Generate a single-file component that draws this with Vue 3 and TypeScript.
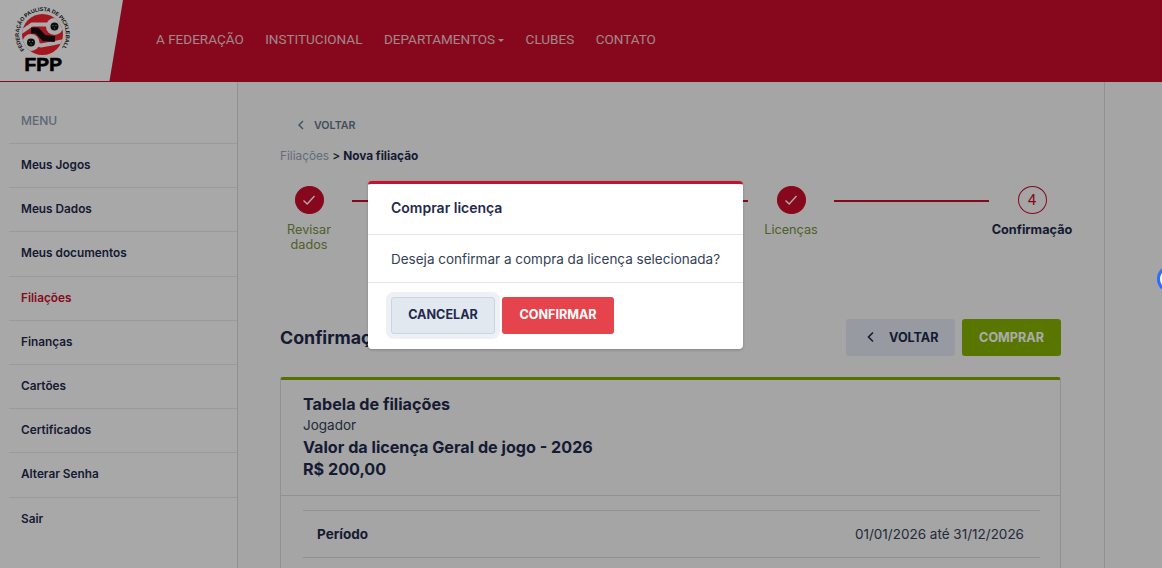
<template>
  <div class="page">
    <header class="topbar">
      <div class="logo_box">
        <svg class="logo" width="90" height="80" viewBox="0 0 90 80">
          <defs>
            <path id="ring" d="M 24.5 49.6 A 23.5 23.5 0 1 1 60.5 49.6" />
            <clipPath id="disc"><circle cx="42.5" cy="34.5" r="20.5" /></clipPath>
          </defs>
          <circle cx="42.5" cy="34.5" r="20.5" fill="#f8222f" />
          <g clip-path="url(#disc)" fill="none">
            <circle cx="54.5" cy="26.5" r="8.5" fill="#fff" />
            <circle cx="31" cy="42.5" r="8.5" fill="#fff" />
            <path d="M21 32 L32 24.5 L46 24.5 L54 27" stroke="#fff" stroke-width="4" />
            <path d="M31 43 L41 45.5 L52 43.5 L64 41" stroke="#fff" stroke-width="4" />
            <path d="M31 30.5 L37 30.5 L44 38 L55 39" stroke="#111" stroke-width="6" />
          </g>
          <circle cx="54.5" cy="26.5" r="4" fill="#151515" />
          <circle cx="31" cy="42.5" r="4" fill="#151515" />
          <g fill="#bbb">
            <circle cx="53" cy="25.5" r="0.6" /><circle cx="56" cy="25.5" r="0.6" /><circle cx="54.5" cy="28" r="0.6" />
            <circle cx="29.5" cy="41.5" r="0.6" /><circle cx="32.5" cy="41.5" r="0.6" /><circle cx="31" cy="44" r="0.6" />
          </g>
          <text class="logo_ring"><textPath href="#ring" textLength="104" lengthAdjust="spacing">FEDERAÇÃO PAULISTA DE PICKLEBALL</textPath></text>
          <text class="logo_fpp" x="24.5" y="70.5">FPP</text>
        </svg>
      </div>
      <nav class="nav">
        <a v-for="item in navItems" :key="item" class="nav_link" :class="{ caret: item === 'DEPARTAMENTOS' }">{{ item }}</a>
      </nav>
    </header>

    <div class="main">
      <aside class="sidebar">
        <div class="menu_title">MENU</div>
        <a v-for="item in menuItems" :key="item" class="menu_item" :class="{ active: item === 'Filiações' }">{{ item }}</a>
      </aside>

      <section class="content">
        <a class="back_link">
          <svg width="8" height="10" viewBox="0 0 8 10"><path d="M6 1 L2 5 L6 9" fill="none" stroke="currentColor" stroke-width="1.4" /></svg>
          VOLTAR
        </a>
        <div class="crumbs"><span class="crumb_muted">Filiações</span> &gt; <b>Nova filiação</b></div>

        <div class="stepper">
          <template v-for="(step, i) in steps" :key="step.label">
            <div class="step">
              <div class="step_circle" :class="{ done: step.done }">
                <svg v-if="step.done" width="14" height="12" viewBox="0 0 14 12"><path d="M1.5 6.5 L5.2 10 L12.5 2" fill="none" stroke="#fff" stroke-width="1.4" /></svg>
                <span v-else>{{ i + 1 }}</span>
              </div>
              <div class="step_label" :class="{ current: !step.done }">{{ step.label }}</div>
            </div>
            <div v-if="i < steps.length - 1" class="step_line"></div>
          </template>
        </div>

        <div class="title_row">
          <h2>Confirmação</h2>
          <div class="title_actions">
            <button class="btn btn_grey">
              <svg width="9" height="12" viewBox="0 0 9 12"><path d="M7 1.5 L2.5 6 L7 10.5" fill="none" stroke="currentColor" stroke-width="1.6" /></svg>
              VOLTAR
            </button>
            <button class="btn btn_green">COMPRAR</button>
          </div>
        </div>

        <div class="card">
          <div class="card_head">
            <div class="card_title">Tabela de filiações</div>
            <div class="card_sub">Jogador</div>
            <div class="card_title">Valor da licença Geral de jogo - 2026</div>
            <div class="card_title">R$ 200,00</div>
          </div>
          <div class="card_body">
            <div class="row">
              <span class="row_label">Período</span>
              <span>01/01/2026 até 31/12/2026</span>
            </div>
          </div>
        </div>
      </section>

      <div class="right_col"></div>
    </div>

    <div class="overlay"></div>
    <div class="chat_bubble"></div>

    <div class="modal">
      <div class="modal_head">Comprar licença</div>
      <div class="modal_body">Deseja confirmar a compra da licença selecionada?</div>
      <div class="modal_foot">
        <button class="btn btn_cancel">CANCELAR</button>
        <button class="btn btn_confirm">CONFIRMAR</button>
      </div>
    </div>
  </div>
</template>

<script setup lang="ts">
const navItems: string[] = ['A FEDERAÇÃO', 'INSTITUCIONAL', 'DEPARTAMENTOS', 'CLUBES', 'CONTATO']

const menuItems: string[] = [
  'Meus Jogos',
  'Meus Dados',
  'Meus documentos',
  'Filiações',
  'Finanças',
  'Cartões',
  'Certificados',
  'Alterar Senha',
  'Sair',
]

const steps: { label: string; done: boolean }[] = [
  { label: 'Revisar dados', done: true },
  { label: 'Documentos', done: true },
  { label: 'Licenças', done: true },
  { label: 'Confirmação', done: false },
]
</script>

<style>
html,
body {
  margin: 0;
  height: 100%;
  overflow: hidden;
}
</style>

<style scoped>
.page {
  position: relative;
  height: 568px;
  overflow: hidden;
  background: #fbfbfb;
  font-family: Inter, "Liberation Sans", sans-serif;
  color: #1f2a4d;
}

.topbar {
  height: 82px;
  display: flex;
  background: #c90d2a;
}

.logo_box {
  width: 123px;
  height: 81px;
  background: #fff;
  clip-path: polygon(0 0, 100% 0, 89% 100%, 0 100%);
}

.logo {
  display: block;
}

.logo_ring {
  font-family: "Liberation Sans", sans-serif;
  font-size: 5.4px;
  font-weight: 700;
  fill: #111;
}

.logo_fpp {
  font-family: "Liberation Sans", sans-serif;
  font-size: 19px;
  font-weight: 700;
  letter-spacing: 0.2px;
  fill: #000;
  stroke: #000;
  stroke-width: 0.7px;
}

.nav {
  display: flex;
  align-items: center;
  gap: 21.5px;
  padding: 0 0 4px 33px;
  margin-top: -1px;
}

.nav_link {
  font-family: Roboto, sans-serif;
  font-size: 13.5px;
  color: #f1c9cf;
}

.nav_link.caret::after {
  content: "";
  display: inline-block;
  margin-left: 3px;
  vertical-align: 2px;
  border-top: 3px solid currentColor;
  border-left: 3px solid transparent;
  border-right: 3px solid transparent;
}

.main {
  display: flex;
  height: 486px;
}

.sidebar {
  width: 228px;
  margin-left: 9px;
  flex: none;
  border-right: 1px solid #d5d8de;
  padding-top: 17px;
}

.menu_title {
  height: 45px;
  line-height: 43px;
  padding-left: 12px;
  box-sizing: border-box;
  border-bottom: 1px solid #e2e8f0;
  font-size: 12px;
  font-weight: 500;
  color: #8a99ad;
}

.menu_item {
  display: block;
  height: 44.2px;
  line-height: 42px;
  box-sizing: border-box;
  padding-left: 12px;
  font-size: 11.8px;
  font-weight: 600;
  border-bottom: 1px solid #e2e8f0;
}

.menu_item:last-child {
  border-bottom: 0;
}

.menu_item.active {
  color: #c8102e;
}

.content {
  flex: none;
  width: 867px;
  box-sizing: border-box;
  padding: 36px 43px 0 42px;
  border-right: 1px solid #d5d8de;
  background: #f6f6f6;
}

.back_link {
  display: flex;
  align-items: center;
  gap: 9px;
  padding-left: 17px;
  height: 14px;
  font-size: 10.7px;
  font-weight: 600;
  color: #64748b;
}

.crumbs {
  margin-top: 16px;
  font-size: 11.8px;
  line-height: 16px;
  font-weight: 500;
}

.crumb_muted {
  color: #94a3b8;
  font-weight: 400;
}

.crumbs b {
  font-weight: 700;
}

.stepper {
  display: flex;
  align-items: flex-start;
  margin-top: 22px;
  margin-left: -14px;
  margin-right: -14px;
}

.step {
  width: 86px;
  flex: none;
  display: flex;
  flex-direction: column;
  align-items: center;
}

.step_circle {
  width: 29px;
  height: 28px;
  box-sizing: border-box;
  border-radius: 50%;
  display: flex;
  align-items: center;
  justify-content: center;
  border: 1px solid #c90d2a;
  color: #c90d2a;
  font-family: Roboto, sans-serif;
  font-size: 15px;
}

.step_circle.done {
  background: #c90d2a;
}

.step_label {
  margin-top: 8px;
  max-width: 62px;
  text-align: center;
  font-size: 12.7px;
  line-height: 15px;
  color: #768f3e;
}

.step_label.current {
  max-width: none;
  color: #1f2a4d;
  font-weight: 700;
}

.step_line {
  width: 155px;
  flex: none;
  height: 2px;
  margin-top: 14px;
  background: #c90d2a;
}

.title_row {
  display: flex;
  align-items: center;
  justify-content: space-between;
  margin-top: 67px;
}

.title_row h2 {
  margin: 0;
  font-size: 17.8px;
  font-weight: 700;
}

.title_actions {
  display: flex;
  gap: 7px;
}

.btn {
  height: 37px;
  box-sizing: border-box;
  border: 0;
  border-radius: 3px;
  font-family: Inter, "Liberation Sans", sans-serif;
  font-size: 12.6px;
  font-weight: 700;
  padding: 0 0 1px;
}

.btn_grey {
  width: 109px;
  padding-left: 20px;
  background: #e2e8f0;
  color: #1f2a4d;
  display: flex;
  align-items: center;
  gap: 14px;
}

.btn_green {
  width: 99px;
  background: #84b000;
  color: #fff;
}

.card {
  margin-top: 21px;
  border: 1px solid #d5d8de;
  border-top: 3px solid #7fa800;
  border-radius: 3px 3px 0 0;
}

.card_head {
  padding: 13px 22px 15px;
  border-bottom: 1px solid #d5d8de;
}

.card_title {
  font-size: 16.15px;
  line-height: 22px;
  font-weight: 700;
}

.card_sub {
  font-size: 13.5px;
  line-height: 21px;
  color: #334155;
}

.card_body {
  padding: 14px 20px 0 22px;
  min-height: 200px;
}

.row {
  display: flex;
  justify-content: space-between;
  height: 48px;
  line-height: 46px;
  padding: 0 16px 0 14px;
  box-sizing: border-box;
  border-top: 1px solid #d5d8de;
  border-bottom: 1px solid #d5d8de;
  font-size: 13.5px;
  color: #334155;
}

.row_label {
  font-weight: 700;
  color: #1f2a4d;
}

.right_col {
  flex: 1;
  background: #f6f6f6;
}

.chat_bubble {
  position: absolute;
  left: 1157px;
  top: 265px;
  width: 28px;
  height: 28px;
  box-sizing: border-box;
  border: 3px solid #2f6bff;
  border-radius: 50%;
  background: #fff;
}

.overlay {
  position: absolute;
  inset: 0;
  background: rgba(0, 0, 0, 0.33);
}

.modal {
  position: absolute;
  left: 368px;
  top: 181px;
  width: 375px;
  box-sizing: border-box;
  background: #fff;
  border-top: 3px solid #c8102e;
  border-radius: 4px;
  box-shadow: 0 1px 3px rgba(0, 0, 0, 0.2);
}

.modal_head {
  height: 51px;
  line-height: 48px;
  padding-left: 23px;
  font-size: 14px;
  font-weight: 600;
  box-sizing: border-box;
  border-bottom: 1px solid #e2e8f0;
}

.modal_body {
  height: 48px;
  line-height: 48px;
  padding-left: 23px;
  font-size: 13.5px;
  color: #334155;
  box-sizing: border-box;
  border-bottom: 1px solid #e2e8f0;
}

.modal_foot {
  display: flex;
  gap: 7px;
  padding: 14px 23px 15px;
}

.btn_cancel {
  width: 104px;
  padding-bottom: 2px;
  background: #e2e8f0;
  color: #1f2a4d;
  border: 1px solid #cbd5e1;
  box-shadow: 0 0 0 5px #edf0f5;
}

.btn_confirm {
  width: 112px;
  padding-bottom: 2px;
  background: #e5444c;
  color: #fff;
}
</style>
